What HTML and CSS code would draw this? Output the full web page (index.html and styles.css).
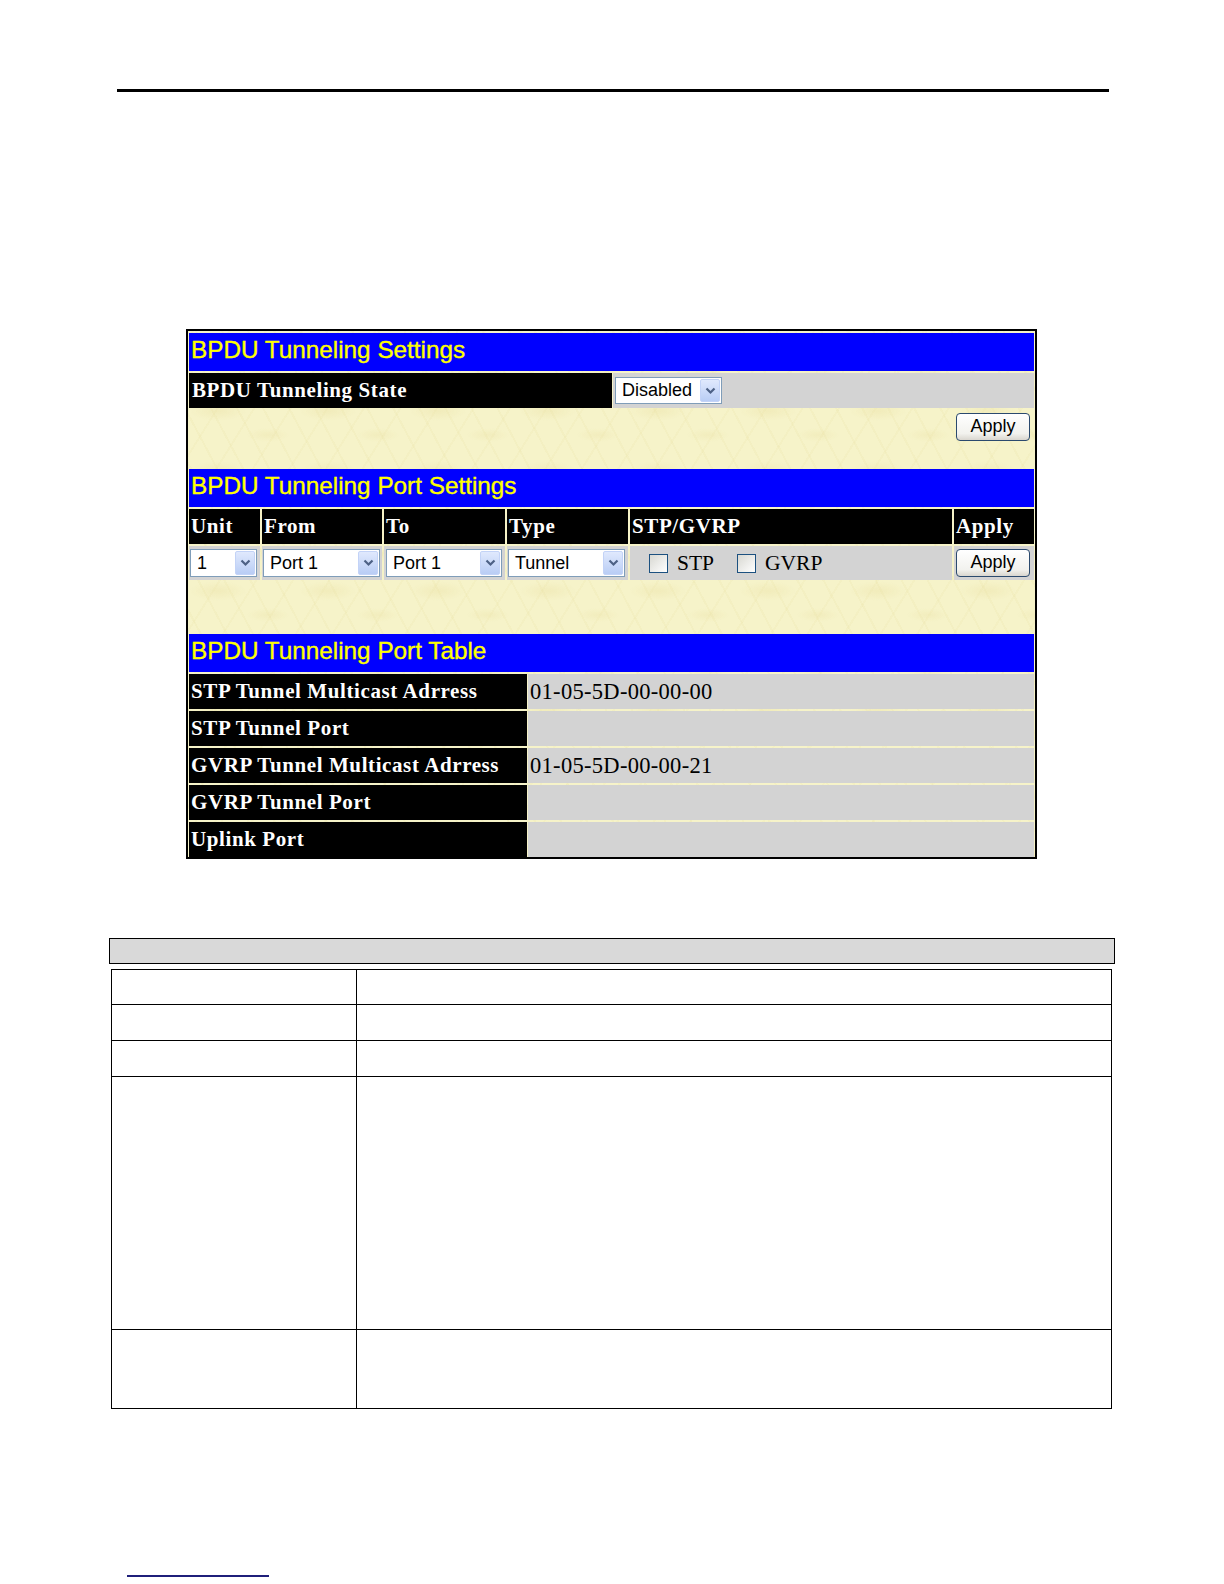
FILE: index.html
```html
<!DOCTYPE html>
<html>
<head>
<meta charset="utf-8">
<title>BPDU Tunneling Settings</title>
<link rel="stylesheet" href="styles.css">
</head>
<body>
<div class="page">
  <div class="rule"></div>

  <div class="shot">
    <div class="title">BPDU Tunneling Settings</div>
    <div class="state-row">
      <div class="label">BPDU Tunneling State</div>
      <div class="gray">
        <div class="select sel-state"><span class="sel-text">Disabled</span><span class="sel-arrow"><svg width="11" height="8" viewBox="0 0 11 8"><path d="M1.5 1.5 L5.5 5.5 L9.5 1.5" stroke="#4d6185" stroke-width="2.2" fill="none"/></svg></span></div>
      </div>
    </div>
    <div class="apply-area"><div class="btn">Apply</div></div>

    <div class="title">BPDU Tunneling Port Settings</div>
    <div class="port-grid">
      <div class="label">Unit</div>
      <div class="label">From</div>
      <div class="label">To</div>
      <div class="label">Type</div>
      <div class="label">STP/GVRP</div>
      <div class="label">Apply</div>

      <div class="gray"><div class="select sel-unit"><span class="sel-text">1</span><span class="sel-arrow"><svg width="11" height="8" viewBox="0 0 11 8"><path d="M1.5 1.5 L5.5 5.5 L9.5 1.5" stroke="#4d6185" stroke-width="2.2" fill="none"/></svg></span></div></div>
      <div class="gray"><div class="select sel-port"><span class="sel-text">Port 1</span><span class="sel-arrow"><svg width="11" height="8" viewBox="0 0 11 8"><path d="M1.5 1.5 L5.5 5.5 L9.5 1.5" stroke="#4d6185" stroke-width="2.2" fill="none"/></svg></span></div></div>
      <div class="gray"><div class="select sel-port sel-to"><span class="sel-text">Port 1</span><span class="sel-arrow"><svg width="11" height="8" viewBox="0 0 11 8"><path d="M1.5 1.5 L5.5 5.5 L9.5 1.5" stroke="#4d6185" stroke-width="2.2" fill="none"/></svg></span></div></div>
      <div class="gray"><div class="select sel-port"><span class="sel-text">Tunnel</span><span class="sel-arrow"><svg width="11" height="8" viewBox="0 0 11 8"><path d="M1.5 1.5 L5.5 5.5 L9.5 1.5" stroke="#4d6185" stroke-width="2.2" fill="none"/></svg></span></div></div>
      <div class="gray checks">
        <span class="cb"></span><span class="cb-text">STP</span>
        <span class="cb cb2"></span><span class="cb-text">GVRP</span>
      </div>
      <div class="gray btn-cell"><div class="btn">Apply</div></div>
    </div>
    <div class="spacer"></div>

    <div class="title">BPDU Tunneling Port Table</div>
    <div class="port-table">
      <div class="label">STP Tunnel Multicast Adrress</div>
      <div class="gray value">01-05-5D-00-00-00</div>
      <div class="label">STP Tunnel Port</div>
      <div class="gray value"></div>
      <div class="label">GVRP Tunnel Multicast Adrress</div>
      <div class="gray value">01-05-5D-00-00-21</div>
      <div class="label">GVRP Tunnel Port</div>
      <div class="gray value"></div>
      <div class="label">Uplink Port</div>
      <div class="gray value"></div>
    </div>
  </div>

  <div class="param-head"></div>
  <table class="params">
    <tr class="r1"><td class="c1"></td><td></td></tr>
    <tr class="r2"><td class="c1"></td><td></td></tr>
    <tr class="r3"><td class="c1"></td><td></td></tr>
    <tr class="r4"><td class="c1"></td><td></td></tr>
    <tr class="r5"><td class="c1"></td><td></td></tr>
  </table>

  <div class="footer-line"></div>
</div>
</body>
</html>
```

FILE: styles.css
```css
html, body {
  margin: 0;
  padding: 0;
  background: #ffffff;
}

.page {
  width: 1224px;
  min-height: 1584px;
  overflow: hidden;
  font-family: "Liberation Serif", "Times New Roman", serif;
}

.rule {
  margin-top: 89px;
  margin-left: 117px;
  width: 992px;
  height: 3px;
  background: #000000;
}

/* ---------- screenshot frame ---------- */
.shot {
  margin-top: 237px;
  margin-left: 186px;
  width: 845px;
  border: 2px solid #000000;
  padding: 2px 1px 0 1px;
  display: grid;
  row-gap: 2px;
  background-color: #f6f3c9;
  background-image:
    radial-gradient(ellipse 40px 14px at 30px 20px, rgba(232, 222, 160, 0.35), transparent 70%),
    radial-gradient(ellipse 30px 10px at 80px 44px, rgba(232, 222, 160, 0.3), transparent 70%),
    repeating-linear-gradient(62deg, rgba(228, 218, 150, 0.14) 0 2px, transparent 2px 23px),
    repeating-linear-gradient(-58deg, rgba(228, 218, 150, 0.12) 0 2px, transparent 2px 31px);
  background-size: 110px 60px, 110px 60px, auto, auto;
}

.title {
  height: 38px;
  box-sizing: border-box;
  padding: 0 0 4px 2px;
  line-height: 34px;
  background: #0000ff;
  color: #ffff00;
  font-family: "Liberation Sans", Arial, sans-serif;
  font-size: 24.3px;
  -webkit-text-stroke: 0.35px #ffff00;
  white-space: nowrap;
}

.label {
  background: #000000;
  color: #ffffff;
  font-family: "Liberation Serif", "Times New Roman", serif;
  font-weight: bold;
  font-size: 21px;
  letter-spacing: 0.6px;
  line-height: 35px;
  padding-left: 2px;
  white-space: nowrap;
  overflow: hidden;
}

.gray {
  background: #d3d3d3;
}

.state-row {
  display: grid;
  grid-template-columns: 423px 1fr;
  column-gap: 1px;
  height: 35px;
}

.state-row .label {
  padding-left: 3px;
}

.state-row .gray {
  display: flex;
  align-items: center;
}

.apply-area {
  height: 57px;
  box-sizing: border-box;
  padding: 3px 4px 0 0;
  display: flex;
  justify-content: flex-end;
  align-items: flex-start;
}

/* ---------- select boxes ---------- */
.select {
  box-sizing: border-box;
  height: 28px;
  border: 1px solid #7f9db9;
  background: #ffffff;
  display: flex;
  align-items: center;
  justify-content: space-between;
  padding: 1px;
}

.sel-text {
  font-family: "Liberation Sans", Arial, sans-serif;
  font-size: 18px;
  color: #000000;
  padding-left: 5px;
  white-space: nowrap;
}

.sel-arrow {
  box-sizing: border-box;
  width: 20px;
  height: 100%;
  border: 1px solid #c3d3f7;
  border-radius: 2px;
  background: linear-gradient(#e0e9fd, #b9cdf5);
  display: flex;
  align-items: center;
  justify-content: center;
}

.sel-state {
  margin-left: 2px;
  width: 107px;
  height: 27px;
}

.sel-unit {
  margin-left: 1px;
  width: 67px;
}

.sel-port {
  margin-left: 1px;
  width: 117px;
}

.sel-to {
  margin-left: 2px;
  width: 116px;
}

/* ---------- buttons ---------- */
.btn {
  box-sizing: border-box;
  width: 74px;
  height: 28px;
  border: 1px solid #2b4a6e;
  border-radius: 4px;
  background: linear-gradient(#ffffff, #f2f2ee 75%, #d9d6cf);
  font-family: "Liberation Sans", Arial, sans-serif;
  font-size: 18px;
  color: #000000;
  display: flex;
  align-items: center;
  justify-content: center;
  padding-bottom: 1px;
}

/* ---------- port settings grid ---------- */
.port-grid {
  display: grid;
  grid-template-columns: 71px 120px 121px 121px 322px 80px;
  grid-template-rows: 35px 34px;
  column-gap: 2px;
  row-gap: 2px;
}

.port-grid .gray {
  display: flex;
  align-items: center;
}

.checks {
  padding-left: 19px;
}

.cb {
  box-sizing: border-box;
  width: 19px;
  height: 19px;
  border: 1px solid #1c5180;
  background: linear-gradient(135deg, #d8d8d2, #ffffff);
  flex: none;
}

.cb2 {
  margin-left: 23px;
}

.cb-text {
  margin-left: 9px;
  font-family: "Liberation Serif", "Times New Roman", serif;
  font-size: 21.5px;
  color: #000000;
}

.btn-cell {
  padding-left: 2px;
}

.spacer {
  height: 50px;
}

/* ---------- port table ---------- */
.port-table {
  display: grid;
  grid-template-columns: 338px 1fr;
  grid-auto-rows: 35px;
  column-gap: 1px;
  row-gap: 2px;
}

.value {
  font-family: "Liberation Serif", "Times New Roman", serif;
  font-size: 22.5px;
  letter-spacing: 0.3px;
  line-height: 35px;
  color: #000000;
  padding-left: 2px;
  white-space: nowrap;
}

/* ---------- parameter table ---------- */
.param-head {
  margin-top: 79px;
  margin-left: 109px;
  width: 1006px;
  height: 26px;
  box-sizing: border-box;
  border: 1.5px solid #000000;
  background: #d9d9d9;
}

.params {
  margin-top: 5px;
  margin-left: 111px;
  width: 1001px;
  border-collapse: collapse;
  table-layout: fixed;
}

.params td {
  border: 1.5px solid #000000;
  padding: 0;
}

.params .c1 {
  width: 244px;
}

.params .r1 { height: 35px; }
.params .r2 { height: 36px; }
.params .r3 { height: 36px; }
.params .r4 { height: 253px; }
.params .r5 { height: 79px; }

.footer-line {
  margin-top: 166px;
  margin-left: 127px;
  width: 142px;
  height: 1.5px;
  background: #1f1f7a;
}
```
